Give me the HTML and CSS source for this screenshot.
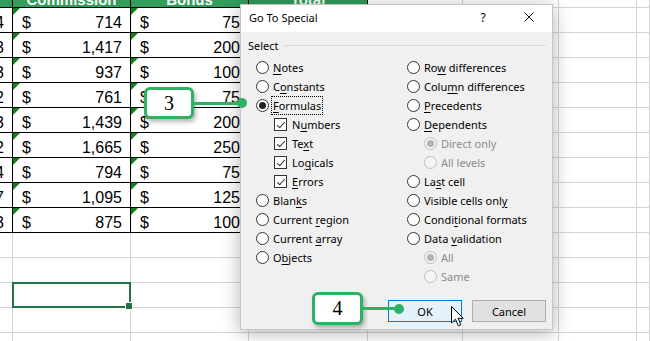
FILE: index.html
```html
<!DOCTYPE html>
<html>
<head>
    <meta charset="UTF-8"/>
    <title>Go To Special</title>
    <link rel="stylesheet" href="styles.css">
</head>
<body>

<div class="sheet">
    <div class="row head">
        <span class="t"></span><span class="t"><b>Commission</b></span><span class="t"><b>Bonus</b></span><span class="t"><b>Total</b></span>
        <span></span><span></span><span></span><span></span>
    </div>
    <div class="row">
        <span class="t id"><em>14</em></span><span class="t acct flag"><em>$</em>714</span><span class="t acct flag"><em>$</em>75</span><span class="t acct"><em>$</em>789</span>
        <span></span><span></span><span></span><span></span>
    </div>
    <div class="row">
        <span class="t id"><em>23</em></span><span class="t acct flag"><em>$</em>1,417</span><span class="t acct flag"><em>$</em>200</span><span class="t acct"><em>$</em>1,617</span>
        <span></span><span></span><span></span><span></span>
    </div>
    <div class="row">
        <span class="t id"><em>33</em></span><span class="t acct flag"><em>$</em>937</span><span class="t acct flag"><em>$</em>100</span><span class="t acct"><em>$</em>1,037</span>
        <span></span><span></span><span></span><span></span>
    </div>
    <div class="row">
        <span class="t id"><em>42</em></span><span class="t acct flag"><em>$</em>761</span><span class="t acct flag"><em>$</em>75</span><span class="t acct"><em>$</em>836</span>
        <span></span><span></span><span></span><span></span>
    </div>
    <div class="row">
        <span class="t id"><em>53</em></span><span class="t acct flag"><em>$</em>1,439</span><span class="t acct flag"><em>$</em>200</span><span class="t acct"><em>$</em>1,639</span>
        <span></span><span></span><span></span><span></span>
    </div>
    <div class="row">
        <span class="t id"><em>62</em></span><span class="t acct flag"><em>$</em>1,665</span><span class="t acct flag"><em>$</em>250</span><span class="t acct"><em>$</em>1,915</span>
        <span></span><span></span><span></span><span></span>
    </div>
    <div class="row">
        <span class="t id"><em>74</em></span><span class="t acct flag"><em>$</em>794</span><span class="t acct flag"><em>$</em>75</span><span class="t acct"><em>$</em>869</span>
        <span></span><span></span><span></span><span></span>
    </div>
    <div class="row">
        <span class="t id"><em>87</em></span><span class="t acct flag"><em>$</em>1,095</span><span class="t acct flag"><em>$</em>125</span><span class="t acct"><em>$</em>1,220</span>
        <span></span><span></span><span></span><span></span>
    </div>
    <div class="row">
        <span class="t id"><em>93</em></span><span class="t acct flag"><em>$</em>875</span><span class="t acct flag"><em>$</em>100</span><span class="t acct"><em>$</em>975</span>
        <span></span><span></span><span></span><span></span>
    </div>
    <div class="row"><span></span><span></span><span></span><span></span><span></span><span></span><span></span><span></span></div>
    <div class="row"><span></span><span></span><span></span><span></span><span></span><span></span><span></span><span></span></div>
    <div class="row"><span></span><span class="sel"></span><span></span><span></span><span></span><span></span><span></span><span></span></div>
    <div class="row"><span></span><span></span><span></span><span></span><span></span><span></span><span></span><span></span></div>
    <div class="row"><span></span><span></span><span></span><span></span><span></span><span></span><span></span><span></span></div>
</div>

<div class="dialog">
    <div class="titlebar">
        <span class="title">Go To Special</span>
        <span class="tb-btn">?</span>
        <span class="tb-btn">
            <svg width="10" height="10" viewBox="0 0 10 10"><path d="M0.5 0.5 L9.5 9.5 M9.5 0.5 L0.5 9.5" stroke="#111" stroke-width="1" fill="none"/></svg>
        </span>
    </div>
    <div class="dlg-body">
        <div class="group">Select</div>
        <div class="options">
            <div class="col">
                <div class="opt"><i class="radio"></i><span><u>N</u>otes</span></div>
                <div class="opt"><i class="radio"></i><span>C<u>o</u>nstants</span></div>
                <div class="opt"><i class="radio on"></i><span class="focus"><u>F</u>ormulas</span></div>
                <div class="opt sub"><i class="check"></i><span>N<u>u</u>mbers</span></div>
                <div class="opt sub"><i class="check"></i><span>Te<u>x</u>t</span></div>
                <div class="opt sub"><i class="check"></i><span>Lo<u>g</u>icals</span></div>
                <div class="opt sub"><i class="check"></i><span><u>E</u>rrors</span></div>
                <div class="opt"><i class="radio"></i><span>Blan<u>k</u>s</span></div>
                <div class="opt"><i class="radio"></i><span>Current <u>r</u>egion</span></div>
                <div class="opt"><i class="radio"></i><span>Current <u>a</u>rray</span></div>
                <div class="opt"><i class="radio"></i><span>O<u>b</u>jects</span></div>
            </div>
            <div class="col">
                <div class="opt"><i class="radio"></i><span>Ro<u>w</u> differences</span></div>
                <div class="opt"><i class="radio"></i><span>Colu<u>m</u>n differences</span></div>
                <div class="opt"><i class="radio"></i><span><u>P</u>recedents</span></div>
                <div class="opt"><i class="radio"></i><span><u>D</u>ependents</span></div>
                <div class="opt sub2 dis"><i class="radio on"></i><span>Direct only</span></div>
                <div class="opt sub2 dis"><i class="radio"></i><span>All levels</span></div>
                <div class="opt"><i class="radio"></i><span>La<u>s</u>t cell</span></div>
                <div class="opt"><i class="radio"></i><span>Visible cells onl<u>y</u></span></div>
                <div class="opt"><i class="radio"></i><span>Condi<u>t</u>ional formats</span></div>
                <div class="opt"><i class="radio"></i><span>Data <u>v</u>alidation</span></div>
                <div class="opt sub2 dis"><i class="radio on"></i><span>All</span></div>
                <div class="opt sub2 dis"><i class="radio"></i><span>Same</span></div>
            </div>
        </div>
        <div class="buttons">
            <button class="btn ok">OK</button>
            <button class="btn">Cancel</button>
        </div>
    </div>
</div>

<!-- step callouts -->
<div class="callout c3">3<i class="leader l3"></i></div>
<div class="callout c4">4<i class="leader l4"></i></div>

<svg class="cursor" width="14" height="22" viewBox="0 0 14 22">
    <path d="M0.5 0.5 V17 L4.5 13.2 L7.3 19.8 L9.8 18.7 L7.1 12.3 H12.3 Z" fill="#fff" stroke="#000" stroke-width="1" stroke-linejoin="round"/>
</svg>

</body>
</html>
```

FILE: styles.css
```css
body {
    margin: 0;
    width: 650px;
    height: 341px;
    overflow: hidden;
    position: relative;
    background: #fff;
    font-family: "Liberation Sans", Arial, sans-serif;
}

/* spreadsheet */

.row {
    display: grid;
    grid-template-columns: 13px 118px 118px 119px 95px 96px 78px 13px;
    height: 25px;
}

.row > span {
    box-sizing: border-box;
    border-right: 1px solid #d4d4d4;
    border-bottom: 1px solid #d4d4d4;
    overflow: hidden;
    white-space: nowrap;
    position: relative;
    font-size: 16px;
    line-height: 25px;
    padding-top: 2px;
    color: #000;
}

.row > .t {
    border-color: #000;
}

.head {
    height: 8px;
}

.head > .t {
    background: #2f9e5b;
    padding: 0;
    line-height: 0;
    text-align: center;
}

.head b {
    color: #fff;
    font-size: 15px;
}

.id {
    display: flex;
    justify-content: flex-end;
    padding-right: 8px;
}

.id em {
    font-style: normal;
    flex: none;
}

.acct {
    display: flex;
    justify-content: space-between;
    padding: 2px 8px 0 9px;
}

.acct em {
    font-style: normal;
}

.flag::before {
    content: "";
    position: absolute;
    left: 0;
    top: 0;
    border-top: 7px solid #10801a;
    border-right: 7px solid transparent;
}

.sel::after {
    content: "";
    position: absolute;
    top: -1px;
    left: -1px;
    right: -1px;
    bottom: -1px;
    border: 2px solid #217346;
}

.sel {
    overflow: visible !important;
    z-index: 1;
}

.sel::before {
    content: "";
    position: absolute;
    right: -3px;
    bottom: -3px;
    width: 6px;
    height: 6px;
    background: #217346;
    border: 1px solid #fff;
    z-index: 2;
}

/* dialog */

.dialog {
    position: absolute;
    left: 240px;
    top: 4px;
    width: 313px;
    height: 326px;
    box-sizing: border-box;
    border: 1px solid #c6c6c6;
    background: #f0f0f0;
    box-shadow: 0 3px 18px rgba(0, 0, 0, 0.3);
    font-family: "Noto Sans", sans-serif;
    font-size: 11px;
    color: #000;
    z-index: 5;
}

.titlebar {
    height: 27px;
    background: #fff;
    display: flex;
    align-items: center;
    padding-bottom: 3px;
    box-sizing: border-box;
}

.title {
    flex: 1;
    padding-left: 8px;
    font-size: 11px;
}

.tb-btn {
    width: 46px;
    display: flex;
    justify-content: center;
    align-items: center;
    font-size: 12px;
}

.dlg-body {
    padding: 6px 6px 0 7px;
}

.group {
    display: flex;
    align-items: center;
    line-height: 16px;
}

.group::after {
    content: "";
    flex: 1;
    border-top: 1px solid #dadada;
    margin-left: 4px;
    margin-top: -1px;
}

.options {
    display: flex;
    margin-top: 4px;
    padding-left: 8px;
}

.col {
    width: 151px;
}

.col + .col {
    flex: 1;
}

.opt {
    display: flex;
    align-items: center;
    height: 19px;
    white-space: nowrap;
}

.opt u {
    text-underline-offset: 2px;
}

.sub {
    padding-left: 18px;
}

.sub2 {
    padding-left: 17px;
}

.radio {
    width: 13px;
    height: 13px;
    box-sizing: border-box;
    border: 1px solid #333;
    border-radius: 50%;
    background: #fff;
    margin-right: 4px;
    flex: none;
    display: grid;
    place-items: center;
}

.radio.on::after {
    content: "";
    width: 7px;
    height: 7px;
    border-radius: 50%;
    background: #222;
}

.check {
    width: 13px;
    height: 13px;
    box-sizing: border-box;
    border: 1px solid #333;
    background: #fff;
    margin-right: 5px;
    flex: none;
    display: grid;
    place-items: center;
}

.check::after {
    content: "";
    width: 3px;
    height: 7px;
    border: solid #222;
    border-width: 0 1.3px 1.3px 0;
    transform: translate(0, -1px) rotate(42deg);
}

.focus {
    outline: 1px dotted #000;
    outline-offset: 1px;
}

.dis {
    color: #8d8d8d;
}

.dis .radio {
    border-color: #bfbfbf;
    background: #f4f4f4;
}

.dis .radio.on::after {
    background: #b3b3b3;
}

.buttons {
    display: flex;
    justify-content: flex-end;
    gap: 10px;
    margin-top: 14px;
}

.btn {
    width: 74px;
    height: 22px;
    padding: 0;
    font: inherit;
    color: #000;
    border: 1px solid #adadad;
    background: #e1e1e1;
}

.btn.ok {
    border-color: #0078d7;
    background: #e5f1fb;
}

/* callouts */

.callout {
    position: absolute;
    width: 50px;
    height: 32px;
    box-sizing: border-box;
    border: 3px solid #2fb163;
    border-radius: 6px;
    background: #fff;
    box-shadow: 2px 3px 4px rgba(0, 0, 0, 0.28);
    font-family: "Liberation Serif", serif;
    font-size: 20px;
    display: grid;
    place-items: center;
    z-index: 10;
}

.c3 {
    left: 144px;
    top: 87px;
}

.c4 {
    left: 312px;
    top: 292px;
    width: 51px;
    height: 33px;
}

.leader {
    position: absolute;
    left: 100%;
    top: 50%;
    height: 3px;
    margin-top: -1.5px;
    background: #2fb163;
}

.leader::after {
    content: "";
    position: absolute;
    right: -5px;
    top: -3.5px;
    width: 10px;
    height: 10px;
    border-radius: 50%;
    background: #2fb163;
}

.l3 {
    width: 51px;
}

.l4 {
    width: 39px;
}

.cursor {
    position: absolute;
    left: 451px;
    top: 306px;
    z-index: 12;
}
```
